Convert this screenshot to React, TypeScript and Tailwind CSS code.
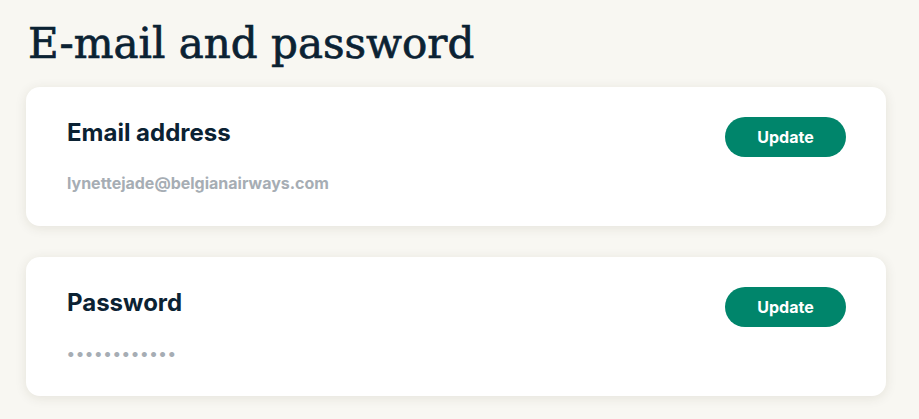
const sans = { fontFamily: "Inter, 'Noto Sans', sans-serif" };

function SettingCard({ label, value, masked }: { label: string; value: string; masked?: boolean }) {
  return (
    <div className="flex h-[139px] items-start justify-between rounded-[14px] bg-white pl-[41px] pr-[40px] pt-[30px] shadow-[0_2px_12px_rgba(60,50,20,0.10)]">
      <div className="flex flex-col">
        <h2 className="text-[24px] font-bold leading-[32px] text-[#0b2233]">{label}</h2>
        {masked ? (
          <p className="mt-[22px] text-[16px] font-bold leading-[24px] tracking-[1.6px] text-[#a6adb4]">{value}</p>
        ) : (
          <p className="mt-[22px] text-[16px] font-bold leading-[24px] text-[#a6adb4]">{value}</p>
        )}
      </div>
      <button className="h-[40px] w-[121px] rounded-full bg-[#00856b] text-[16px] font-bold text-white">
        Update
      </button>
    </div>
  );
}

export default function App() {
  return (
    <div className="min-h-screen bg-[#f8f7f2] px-[26px] pt-[14px] pb-[24px]" style={sans}>
      <h1
        className="ml-[2px] text-[42px] font-normal leading-[60px] text-[#0b2233] [-webkit-text-stroke:0.7px_#0b2233]"
        style={{ fontFamily: "'DejaVu Serif', 'Liberation Serif', serif" }}
      >
        E-mail and password
      </h1>
      <div className="mt-[13px] flex w-[860px] flex-col gap-[31px]">
        <SettingCard label="Email address" value="lynettejade@belgianairways.com" />
        <SettingCard label="Password" value="••••••••••••" masked />
      </div>
    </div>
  );
}
